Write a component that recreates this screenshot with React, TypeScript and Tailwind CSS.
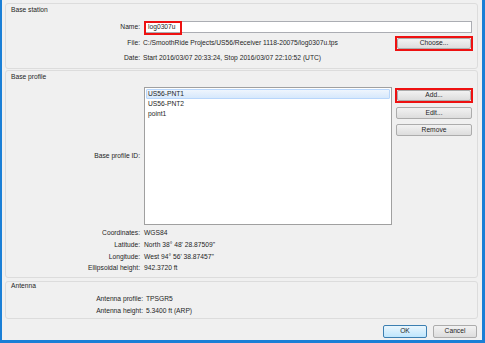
import React from "react";

const font = { fontFamily: '"Liberation Sans", Arial, sans-serif' };

function Button({ label, marked }: { label: string; marked?: boolean }) {
    const btn = (
        <div className="flex h-full w-full items-center justify-center rounded-[2px] border border-[#acacac] bg-gradient-to-b from-[#f2f2f2] to-[#dddddd] text-[6.7px] text-[#1e1e1e]">
            {label}
        </div>
    );
    if (marked) {
        return <div className="h-[15px] w-[78px] border-2 border-[#ee1111]">{btn}</div>;
    }
    return <div className="ml-[1px] h-[12px] w-[76px]">{btn}</div>;
}

function Row({ label, value }: { label: string; value: string }) {
    return (
        <div className="flex h-[11.6px] items-center">
            <div className="w-[134px] text-right">{label}</div>
            <div className="ml-[4px]">{value}</div>
        </div>
    );
}

export default function App() {
    return (
        <div
            className="flex h-[343px] w-[485px] flex-col border-b-[3px] border-l-2 border-r-[3px] border-[#1a7fd6] bg-[#f0f0f0] pl-[3px] pr-[4px] text-[6.7px] leading-none text-[#1e1e1e]"
            style={font}
        >
            {/* Base station */}
            <div className="mt-[3px] h-[66px] rounded-[3px] border border-[#dcdcdc] pr-[4px]">
                <div className="pl-[5px] pt-[1px] leading-[10px]">Base station</div>
                <div className="mt-[6px] flex h-[12px] items-center">
                    <div className="w-[134px] text-right">Name:</div>
                    <div className="relative ml-[5px] mr-[1px] flex h-[12px] flex-1 items-center border border-[#abadb3] bg-white pl-[2px]">
                        log0307u
                        <span className="absolute -left-[2px] -top-[1px] h-[14px] w-[38px] border-2 border-[#ee1111]" />
                    </div>
                </div>
                <div className="mt-[3px] flex h-[15px] items-center">
                    <div className="w-[134px] text-right">File:</div>
                    <div className="ml-[3px] flex-1">C:/SmoothRide Projects/US56/Receiver 1118-20075/log0307u.tps</div>
                    <Button label="Choose..." marked />
                </div>
                <div className="mt-[1px] flex h-[12px] items-center">
                    <div className="w-[134px] text-right">Date:</div>
                    <div className="ml-[3px]">Start 2016/03/07 20:33:24, Stop 2016/03/07 22:10:52 (UTC)</div>
                </div>
            </div>

            {/* Base profile */}
            <div className="mt-[1px] h-[208px] rounded-[3px] border border-[#dcdcdc] pr-[4px]">
                <div className="pl-[5px] pt-[1px] leading-[10px]">Base profile</div>
                <div className="mt-[5px] flex h-[138px]">
                    <div className="flex w-[134px] items-center justify-end">Base profile ID:</div>
                    <div className="ml-[4px] h-full w-[248px] border border-[#a0a0a0] bg-white p-[1px]">
                        <div className="flex h-[10px] items-center rounded-[1px] border border-[#b8d6fb] bg-gradient-to-b from-[#eef5fd] to-[#d6e8fc] pl-[1px]">
                            US56-PNT1
                        </div>
                        <div className="flex h-[10px] items-center pl-[2px]">US56-PNT2</div>
                        <div className="flex h-[10px] items-center pl-[2px]">point1</div>
                    </div>
                    <div className="ml-[3px] flex flex-col">
                        <div className="mt-[1px]">
                            <Button label="Add..." marked />
                        </div>
                        <div className="mt-[4px]">
                            <Button label="Edit..." />
                        </div>
                        <div className="mt-[5px]">
                            <Button label="Remove" />
                        </div>
                    </div>
                </div>
                <div className="mt-[3px]">
                    <Row label="Coordinates:" value="WGS84" />
                    <Row label="Latitude:" value={"North 38° 48' 28.87509\""} />
                    <Row label="Longitude:" value={"West 94° 56' 38.87457\""} />
                    <Row label="Ellipsoidal height:" value="942.3720 ft" />
                </div>
            </div>

            {/* Antenna */}
            <div className="mt-[3px] h-[38px] rounded-[3px] border border-[#dcdcdc]">
                <div className="pl-[5px] leading-[8px]">Antenna</div>
                <div className="mt-[3px]">
                    <div className="flex h-[12px] items-center">
                        <div className="w-[137px] text-right">Antenna profile:</div>
                        <div className="ml-[3px]">TPSGR5</div>
                    </div>
                    <div className="flex h-[12px] items-center">
                        <div className="w-[137px] text-right">Antenna height:</div>
                        <div className="ml-[3px]">5.3400 ft (ARP)</div>
                    </div>
                </div>
            </div>

            {/* Dialog buttons */}
            <div className="mt-[6px] flex justify-end gap-[6px] pr-[1px]">
                <div className="flex h-[13px] w-[44px] items-center justify-center rounded-[2px] border border-[#3c7fb1] bg-gradient-to-b from-[#eaf6fd] to-[#bee6fd]">
                    OK
                </div>
                <div className="flex h-[13px] w-[44px] items-center justify-center rounded-[2px] border border-[#acacac] bg-gradient-to-b from-[#f2f2f2] to-[#dddddd]">
                    Cancel
                </div>
            </div>
        </div>
    );
}
